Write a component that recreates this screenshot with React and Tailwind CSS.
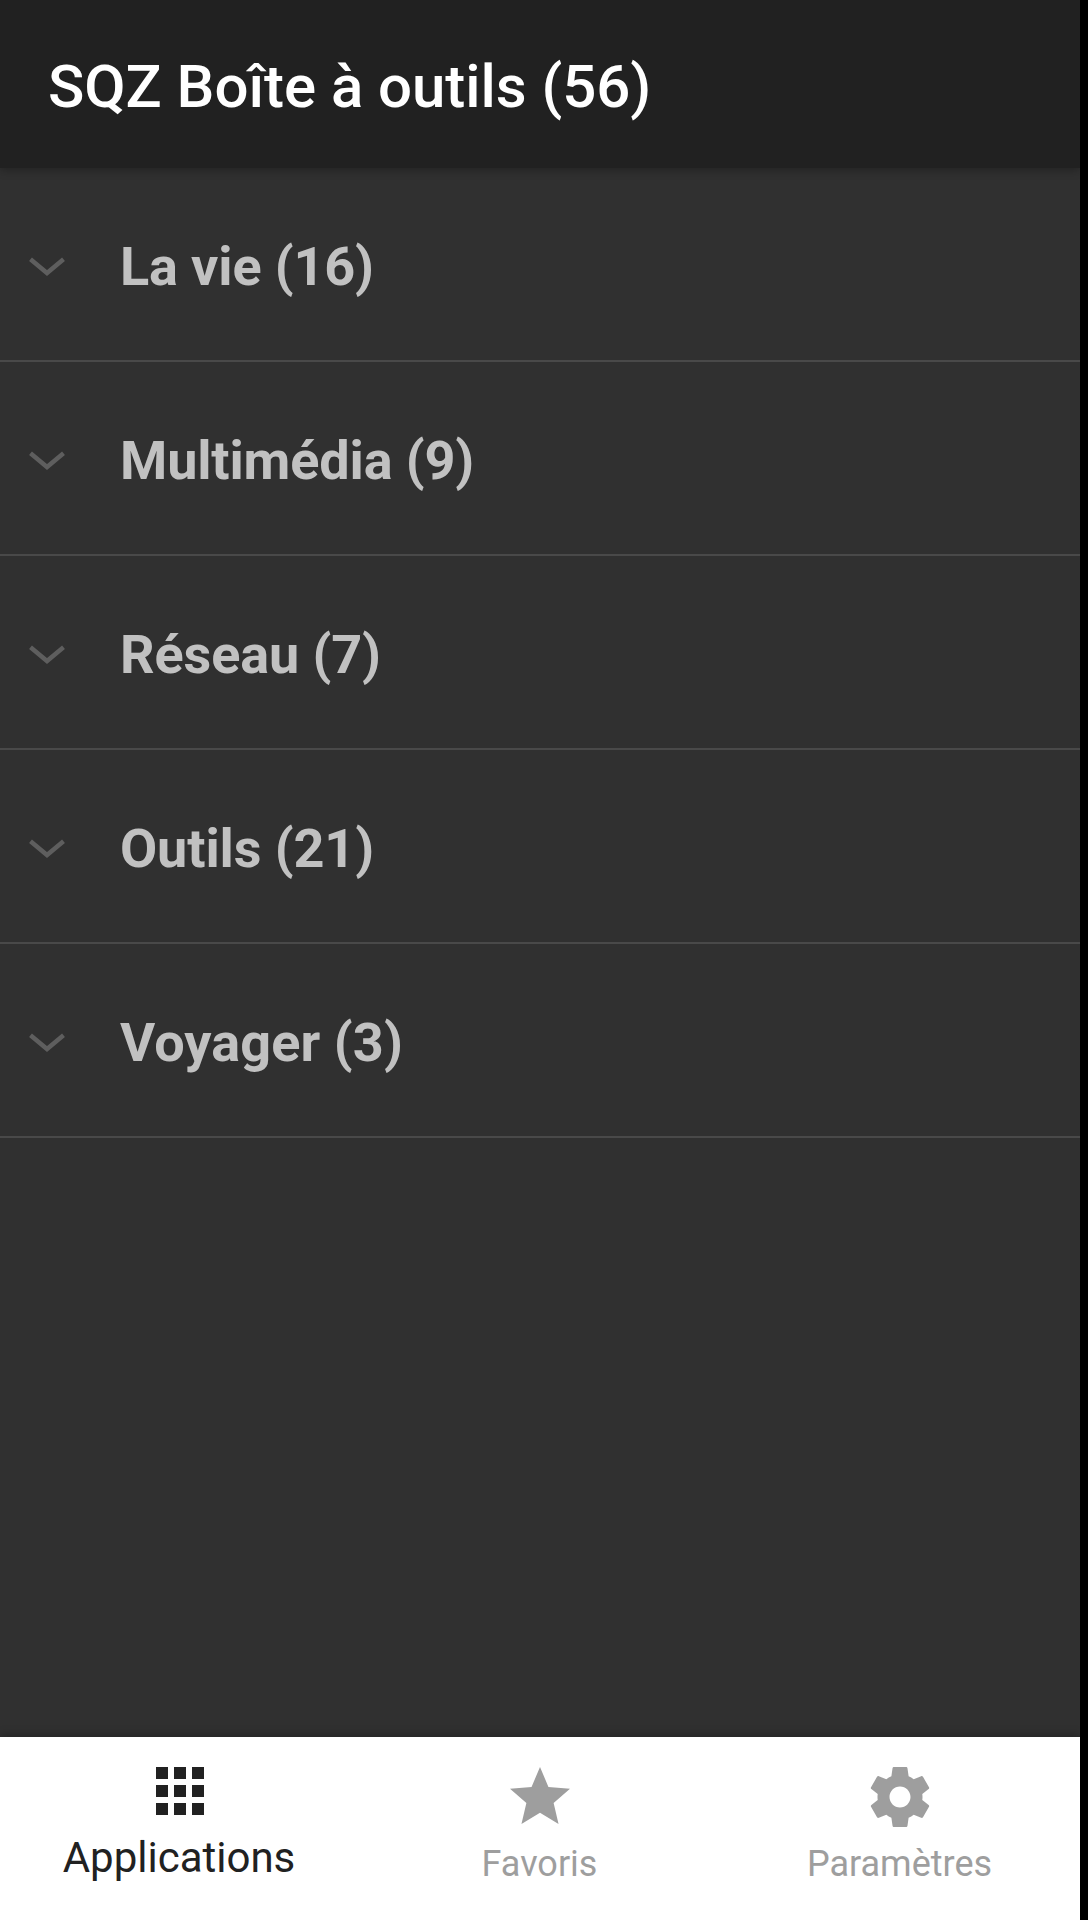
const groups = [
  { label: "La vie (16)", tracking: "tracking-[-0.15px]" },
  { label: "Multimédia (9)", tracking: "tracking-[-0.15px]" },
  { label: "Réseau (7)", tracking: "tracking-[-0.12px]" },
  { label: "Outils (21)", tracking: "tracking-[-0.12px]" },
  { label: "Voyager (3)", tracking: "tracking-[0.1px]" },
];

export default function App() {
  return (
    <div className="h-[1920px] w-[1088px] bg-black font-['Roboto',sans-serif]">
      <div className="flex h-full w-[1080px] flex-col bg-[#303030]">
        <header className="flex h-[168px] shrink-0 items-center bg-[#212121] pl-12 shadow-[0_2px_9px_rgba(0,0,0,0.3)]">
          <h1 className="pt-1.5 text-[60px] leading-none font-medium tracking-[-0.05px] whitespace-nowrap text-white">SQZ Boîte à outils (56)</h1>
        </header>
        <main className="flex-1">
          {groups.map((g) => (
            <div key={g.label} className="flex h-[194px] items-center border-b-2 border-[#494949] pt-[6px]">
              <svg className="ml-[28px] h-[20px] w-[38px]" viewBox="0 0 38 20" fill="none" stroke="#5e5e5e" strokeWidth="4.5">
                <path d="M2.5 2.3 19 16 35.5 2.3" />
              </svg>
              <span className={`ml-[54px] text-[54px] leading-none font-bold whitespace-nowrap text-[#c1c1c1] ${g.tracking}`}>{g.label}</span>
            </div>
          ))}
        </main>
        <nav className="grid h-[183px] shrink-0 grid-cols-3 bg-white shadow-[0_-1px_10px_rgba(0,0,0,0.3)]">
          <div className="flex flex-col items-center text-[#212121]">
            <svg className="mt-[18px] h-[72px] w-[72px]" viewBox="0 0 24 24" fill="currentColor">
              <path d="M4 8h4V4H4v4zm6 12h4v-4h-4v4zm-6 0h4v-4H4v4zm0-6h4v-4H4v4zm6 0h4v-4h-4v4zm6-10v4h4V4h-4zm-6 4h4V4h-4v4zm6 6h4v-4h-4v4zm0 6h4v-4h-4v4z" />
            </svg>
            <span className="mt-[10px] pr-[2px] text-[42px] leading-[42px]">Applications</span>
          </div>
          <div className="flex flex-col items-center text-[#9e9e9e]">
            <svg className="mt-[24px] h-[72px] w-[72px]" viewBox="0 0 24 24" fill="currentColor">
              <path d="M12 17.27 18.18 21l-1.64-7.03L22 9.24l-7.19-.61L12 2 9.19 8.63 2 9.24l5.46 4.73L5.82 21z" />
            </svg>
            <span className="mt-[13px] pr-[1px] text-[36px] leading-[36px]">Favoris</span>
          </div>
          <div className="flex flex-col items-center text-[#9e9e9e]">
            <svg className="mt-[24px] h-[72px] w-[72px]" viewBox="0 0 24 24" fill="currentColor">
              <path d="M19.43 12.98c.04-.32.07-.64.07-.98s-.03-.66-.07-.98l2.11-1.65c.19-.15.24-.42.12-.64l-2-3.46c-.12-.22-.39-.3-.61-.22l-2.49 1c-.52-.4-1.08-.73-1.69-.98l-.38-2.65C14.46 2.18 14.25 2 14 2h-4c-.25 0-.46.18-.49.42l-.38 2.65c-.61.25-1.17.59-1.69.98l-2.49-1c-.23-.09-.49 0-.61.22l-2 3.46c-.13.22-.07.49.12.64l2.11 1.65c-.04.32-.07.65-.07.98s.03.66.07.98l-2.11 1.65c-.19.15-.24.42-.12.64l2 3.46c.12.22.39.3.61.22l2.49-1c.52.4 1.08.73 1.69.98l.38 2.65c.03.24.24.42.49.42h4c.25 0 .46-.18.49-.42l.38-2.65c.61-.25 1.17-.59 1.69-.98l2.49 1c.23.09.49 0 .61-.22l2-3.46c.12-.22.07-.49-.12-.64l-2.11-1.65zM12 15.5c-1.93 0-3.5-1.57-3.5-3.5s1.57-3.5 3.5-3.5 3.5 1.57 3.5 3.5-1.57 3.5-3.5 3.5z" />
            </svg>
            <span className="mt-[13px] pr-[1px] text-[36px] leading-[36px]">Paramètres</span>
          </div>
        </nav>
      </div>
    </div>
  );
}
